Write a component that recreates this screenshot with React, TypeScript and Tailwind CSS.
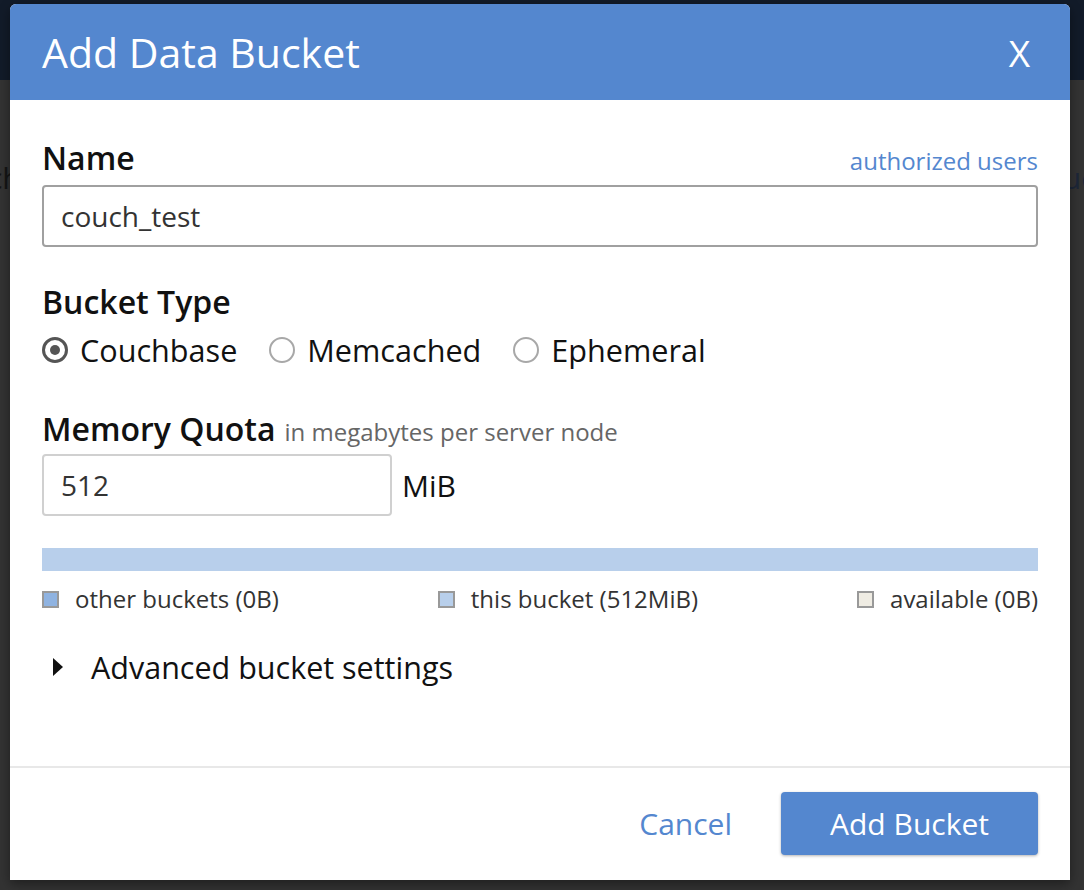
import React from "react";

function Radio({ checked, label }: { checked?: boolean; label: string }) {
  return (
    <label className="flex items-center gap-[12px]">
      {checked ? (
        <span className="flex h-[26px] w-[26px] items-center justify-center rounded-full border-[3px] border-[#555]">
          <span className="h-[10px] w-[10px] rounded-full bg-[#555]" />
        </span>
      ) : (
        <span className="h-[26px] w-[26px] rounded-full border-2 border-[#a8a8a8]" />
      )}
      <span className="text-[30.6px] leading-[40px] text-[#111]">{label}</span>
    </label>
  );
}

function Legend({ color, label }: { color: string; label: string }) {
  return (
    <div className="flex items-center gap-[16px]">
      <span className={`h-[17px] w-[17px] border-2 border-[#999] ${color}`} />
      <span className="text-[24px] leading-[32px] text-[#333]">{label}</span>
    </div>
  );
}

export default function App() {
  return (
    <div className="relative h-[890px] w-[1084px] overflow-hidden bg-[#333333] font-['Open_Sans',sans-serif]">
      <div className="h-[80px] bg-[#121b29]" />
      <div className="flex justify-between pt-[78px] text-[30px] leading-[40px]">
        <span className="-ml-[12px] text-[#151515]">ch</span>
        <span className="-mr-[14px] text-[#1d2738]">ue</span>
      </div>

      <div className="absolute left-[10px] top-[4px] flex h-[876px] w-[1060px] flex-col rounded-t-[6px] bg-white shadow-[0_4px_12px_rgba(0,0,0,0.4)]">
        <div className="flex h-[96px] items-center justify-between rounded-t-[6px] bg-[#5487cf] pl-[32px] pr-[40px] text-white">
          <h1 className="text-[41px] leading-none">Add Data Bucket</h1>
          <span className="text-[37px] leading-none">X</span>
        </div>

        <div className="flex-1 px-[32px] pt-[38px]">
          <div className="flex items-baseline justify-between">
            <span className="text-[32px] font-semibold leading-[40px] text-[#111]">Name</span>
            <a className="text-[24px] text-[#5487cf]">authorized users</a>
          </div>
          <div className="mt-[6px] flex h-[62px] items-center rounded-[4px] border-2 border-[#a0a0a0] px-[17px] text-[28px] text-[#333]">
            couch_test
          </div>

          <div className="mt-[35px] text-[32px] font-semibold leading-[40px] text-[#111]">Bucket Type</div>
          <div className="mt-[8px] flex items-center gap-[32px]">
            <Radio checked label="Couchbase" />
            <Radio label="Memcached" />
            <Radio label="Ephemeral" />
          </div>

          <div className="mt-[39px] flex items-baseline gap-[9px]">
            <span className="text-[32px] font-semibold leading-[40px] text-[#111]">Memory Quota</span>
            <span className="text-[24px] text-[#666]">in megabytes per server node</span>
          </div>
          <div className="mt-[4px] flex items-center gap-[10px]">
            <div className="flex h-[62px] w-[350px] items-center rounded-[4px] border-2 border-[#d0d0d0] px-[17px] text-[28px] text-[#333]">
              512
            </div>
            <span className="text-[30px] text-[#111]">MiB</span>
          </div>

          <div className="mt-[32px] h-[23px] bg-[#b8cfeb]" />
          <div className="mt-[12px] flex items-center justify-between">
            <Legend color="bg-[#8fb3e1]" label="other buckets (0B)" />
            <Legend color="bg-[#b8cfeb]" label="this bucket (512MiB)" />
            <Legend color="bg-[#efece3]" label="available (0B)" />
          </div>

          <div className="mt-[32px] flex items-center gap-[27px] pl-[10px]">
            <svg width="12" height="20" viewBox="0 0 12 20">
              <path d="M1 1 L11 10 L1 19 Z" fill="#111" />
            </svg>
            <span className="text-[30.5px] leading-[40px] text-[#111]">Advanced bucket settings</span>
          </div>
        </div>

        <div className="flex items-center justify-end gap-[49px] border-t-2 border-[#e8e8e8] px-[32px] pb-[25px] pt-[24px]">
          <a className="text-[30px] text-[#5487cf]">Cancel</a>
          <button className="h-[63px] w-[257px] rounded-[4px] bg-[#5487cf] text-[30px] text-white shadow-[0_1px_3px_rgba(0,0,0,0.3)]">
            Add Bucket
          </button>
        </div>
      </div>
    </div>
  );
}
